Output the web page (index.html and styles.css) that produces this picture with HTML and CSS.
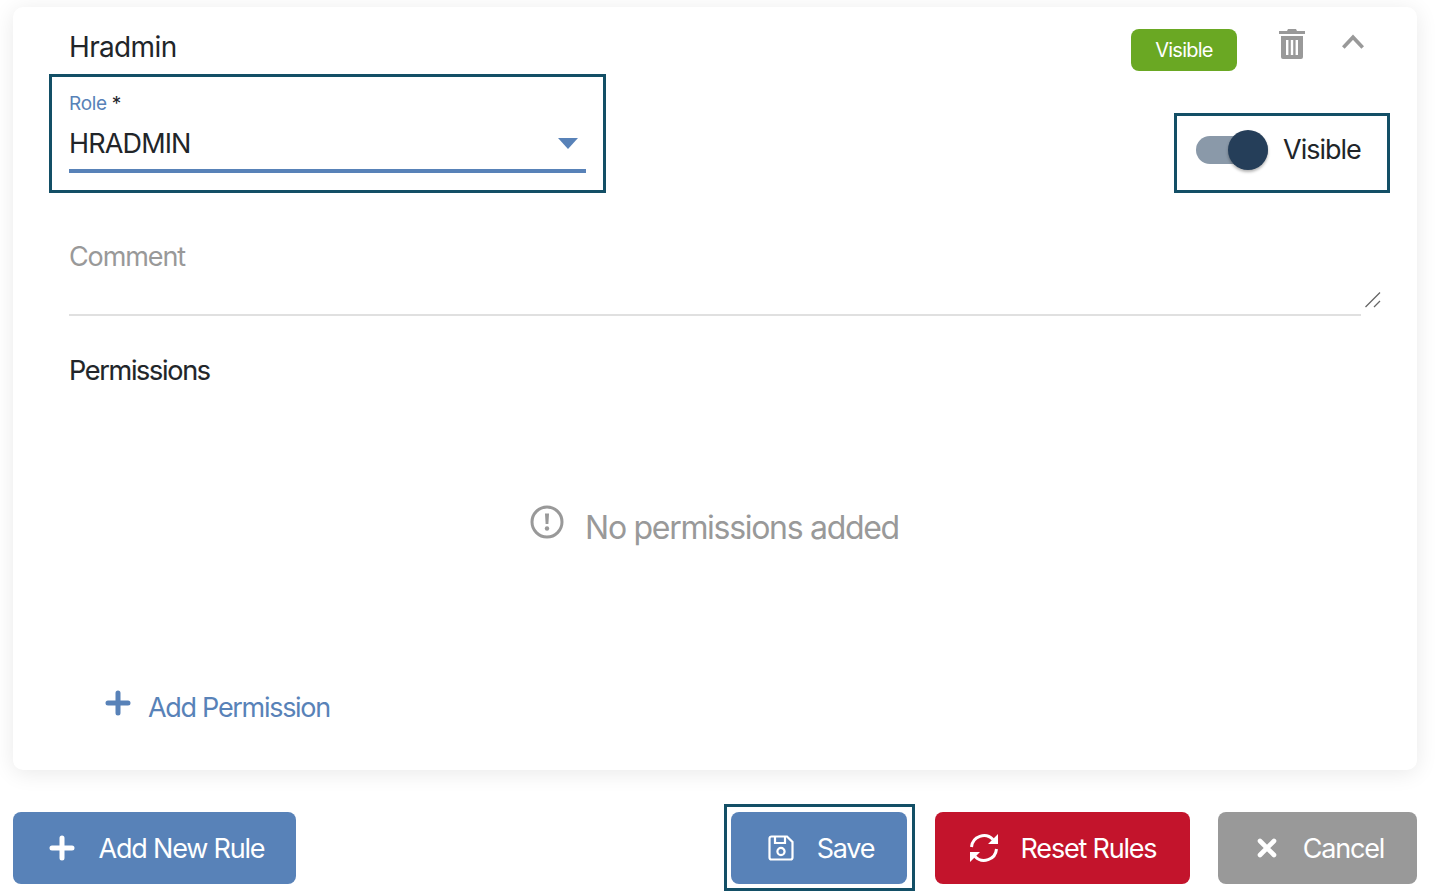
FILE: index.html
```html
<!DOCTYPE html>
<html>
<head>
  <meta charset="utf-8">
  <title>Rules</title>
  <link rel="stylesheet" href="styles.css">
</head>
<body>
  <div class="page">
    <div class="card">
      <div class="card-head">
        <div class="card-title">Hradmin</div>
        <span class="badge">Visible</span>
        <svg class="icon-trash" viewBox="0 0 26 30"><path fill="#999" d="M9 0h8l1 2h8v3H0V2h8zM2 7h22v21a2 2 0 0 1-2 2H4a2 2 0 0 1-2-2zm5 4v15h2.400V11zm4.800 0v15h2.400V11zm4.800 0v15H19V11z" fill-rule="evenodd"/></svg>
        <svg class="icon-chevron" viewBox="0 0 22 15"><path fill="none" stroke="#999" stroke-width="3.600" d="M1.300 13.500 11 3.200l9.700 10.300"/></svg>
      </div>
      <div class="fields">
        <div class="focus-box role-box">
          <div class="role-label"><span class="role-name">Role</span> *</div>
          <div class="role-select">
            <span>HRADMIN</span>
            <svg class="icon-caret" viewBox="0 0 20 11"><path fill="#5882b8" d="M0 0h20L10 11z"/></svg>
          </div>
        </div>
        <div class="focus-box toggle-box">
          <div class="toggle">
            <div class="toggle-track"></div>
            <div class="toggle-thumb"></div>
          </div>
          <span>Visible</span>
        </div>
      </div>
      <div class="comment">
        <span>Comment</span>
        <svg class="icon-resize" viewBox="0 0 16 16"><path fill="none" stroke="#666" stroke-width="1.300" d="M0.500 15 15 0.500M9 15 15 9"/></svg>
      </div>
      <h2 class="perm-title">Permissions</h2>
      <div class="empty">
        <svg class="icon-alert" viewBox="0 0 34 34">
          <circle cx="17" cy="17" r="15" fill="none" stroke="#999" stroke-width="3"/>
          <path fill="#999" d="M15 8.500h4l-.6 10.500h-2.800z"/>
          <circle cx="17" cy="23.500" r="2.200" fill="#999"/>
        </svg>
        <span>No permissions added</span>
      </div>
      <div class="add-perm">
        <svg class="icon-plus" viewBox="0 0 26 26"><path fill="none" stroke="#5882b8" stroke-width="5" stroke-linecap="round" d="M13 3v20M3 13h20"/></svg>
        <span>Add Permission</span>
      </div>
    </div>
    <div class="actions">
      <button class="btn btn-blue btn-add">
        <svg class="icon-plus" viewBox="0 0 26 26"><path fill="none" stroke="#fff" stroke-width="5" stroke-linecap="round" d="M13 3v20M3 13h20"/></svg>
        <span>Add New Rule</span>
      </button>
      <div class="save-outline">
        <button class="btn btn-blue btn-save">
          <svg class="icon-save" viewBox="0 0 26 26">
            <path fill="none" stroke="#fff" stroke-width="2.200" d="M3.500 1.500h15.500l5.500 5.500v15.500a2 2 0 0 1-2 2h-19a2 2 0 0 1-2-2v-19a2 2 0 0 1 2-2z"/>
            <path fill="none" stroke="#fff" stroke-width="2.200" d="M7 1.500v6.500h10V1.500"/>
            <circle cx="13" cy="16.500" r="3.600" fill="none" stroke="#fff" stroke-width="2.200"/>
          </svg>
          <span>Save</span>
        </button>
      </div>
      <button class="btn btn-red btn-reset">
        <svg class="icon-sync" viewBox="0 0 30 30">
          <path fill="none" stroke="#fff" stroke-width="3" d="M2.500 14A12.500 12.500 0 0 1 24 6.500M27.500 16A12.500 12.500 0 0 1 6 23.500"/>
          <path fill="#fff" d="M29 1v10H19zM1 29V19h10z"/>
        </svg>
        <span>Reset Rules</span>
      </button>
      <button class="btn btn-grey btn-cancel">
        <svg class="icon-x" viewBox="0 0 20 20"><path fill="none" stroke="#fff" stroke-width="4.600" stroke-linecap="round" d="M3 3l14 14M17 3 3 17"/></svg>
        <span>Cancel</span>
      </button>
    </div>
  </div>
</body>
</html>
```

FILE: styles.css
```css
html,
body {
  margin: 0;
  padding: 0;
  background: #fff;
}

body {
  font-family: Inter, 'Liberation Sans', sans-serif;
  color: #212529;
  height: 894px;
  overflow: hidden;
}

.page {
  padding: 7px 19px 0 13px;
}

.card {
  box-sizing: border-box;
  height: 763px;
  padding: 0 27px 0 36px;
  background: #fff;
  border-radius: 10px;
  box-shadow: 0 3px 22px rgba(0, 0, 0, .09);
}

.card-head {
  display: flex;
  align-items: flex-start;
  height: 67px;
}

.card-title {
  flex: 1;
  margin: 22px 0 0 20px;
  font-size: 28px;
  line-height: 36px;
  letter-spacing: -.65px;
}

.badge {
  width: 106px;
  height: 42px;
  margin-top: 22px;
  border-radius: 8px;
  background: #6aa823;
  color: #fff;
  font-size: 20px;
  line-height: 42px;
  text-align: center;
  letter-spacing: -.75px;
}

.icon-trash {
  width: 26px;
  height: 30px;
  margin: 22px 0 0 42px;
}

.icon-chevron {
  width: 22px;
  height: 15px;
  margin: 27px 26px 0 37px;
}

.fields {
  display: flex;
  align-items: flex-end;
  justify-content: space-between;
}

.focus-box {
  box-sizing: border-box;
  border: 3px solid #134f66;
}

.role-box {
  width: 557px;
  height: 119px;
  padding: 14px 17px 0;
}

.role-label {
  font-size: 19px;
  line-height: 26px;
  letter-spacing: -.3px;
}

.role-name {
  color: #5882b8;
}

.role-select {
  display: flex;
  align-items: center;
  justify-content: space-between;
  box-sizing: border-box;
  height: 56px;
  padding: 0 8px 0 0;
  border-bottom: 4px solid #5882b8;
  font-size: 27px;
  letter-spacing: -.85px;
}

.icon-caret {
  width: 20px;
  height: 11px;
}

.toggle-box {
  display: flex;
  align-items: center;
  width: 216px;
  height: 80px;
  padding: 0 0 7px 19px;
  font-size: 27px;
  letter-spacing: -1px;
}

.toggle {
  position: relative;
  width: 72px;
  height: 28px;
  margin-right: 15px;
}

.toggle-track {
  width: 72px;
  height: 28px;
  border-radius: 14px;
  background: #8a99a9;
}

.toggle-thumb {
  position: absolute;
  top: -6px;
  left: 32px;
  width: 40px;
  height: 40px;
  border-radius: 50%;
  background: #253e59;
  box-shadow: 0 2px 3px rgba(0, 0, 0, .3);
}

.comment {
  position: relative;
  box-sizing: border-box;
  width: 1292px;
  height: 123px;
  margin-left: 20px;
  padding-top: 46px;
  border-bottom: 2px solid #e0e0e0;
  color: #999;
  font-size: 27px;
  line-height: 36px;
  letter-spacing: -1.1px;
}

.icon-resize {
  position: absolute;
  right: -20px;
  bottom: 6px;
  width: 16px;
  height: 16px;
}

.perm-title {
  margin: 37px 0 0 20px;
  font-size: 27px;
  font-weight: 400;
  line-height: 36px;
  letter-spacing: -1.3px;
  -webkit-text-stroke: .15px #212529;
}

.empty {
  display: flex;
  align-items: center;
  justify-content: center;
  height: 40px;
  margin: 118px 10px 0 0;
  color: #999;
  font-size: 32px;
  letter-spacing: -1.3px;
}

.icon-alert {
  width: 34px;
  height: 34px;
  margin: -10px 21px 0 0;
}

.add-perm {
  display: flex;
  align-items: center;
  height: 40px;
  margin: 140px 0 0 56px;
  color: #5882b8;
  font-size: 27px;
  letter-spacing: -1.3px;
}

.icon-plus {
  width: 26px;
  height: 26px;
  margin-top: -8px;
}

.add-perm .icon-plus {
  margin-right: 17px;
}

.actions {
  display: flex;
  align-items: center;
  margin-top: 34px;
}

.btn {
  display: flex;
  align-items: center;
  justify-content: center;
  box-sizing: border-box;
  height: 72px;
  padding: 0;
  border: 0;
  border-radius: 8px;
  color: #fff;
  font-family: inherit;
  font-size: 27px;
  letter-spacing: -1.2px;
}

.btn span {
  padding-top: 1px;
}

.btn-blue {
  background: #5882b8;
}

.btn-red {
  background: #c3142c;
}

.btn-grey {
  background: #999;
}

.btn-add {
  width: 283px;
  margin-right: auto;
  padding-left: 4px;
}

.btn-add .icon-plus {
  margin: 0 24px 0 0;
}

.save-outline {
  box-sizing: border-box;
  width: 191px;
  height: 87px;
  padding: 5px 5px 0 4px;
  border: 3px solid #134f66;
}

.btn-save {
  width: 176px;
  padding-left: 4px;
}

.icon-save {
  width: 26px;
  height: 26px;
  margin-right: 23px;
}

.btn-reset {
  width: 255px;
  margin-left: 20px;
}

.icon-sync {
  width: 30px;
  height: 30px;
  margin-right: 22px;
}

.btn-cancel {
  width: 199px;
  margin-left: 28px;
  padding-left: 6px;
}

.icon-x {
  width: 20px;
  height: 20px;
  margin-right: 26px;
}
```
